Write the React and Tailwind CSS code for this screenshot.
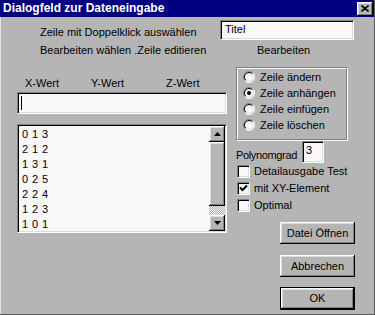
const SUNKEN =
  'border border-t-[#808080] border-l-[#808080] border-r-white border-b-white shadow-[inset_1px_1px_0_#000,inset_-1px_-1px_0_#dcdcdc]'
const RAISED =
  'shadow-[inset_-1px_-1px_0_#000,inset_1px_1px_0_#fff,inset_-2px_-2px_0_#808080,inset_2px_2px_0_#dcdcdc]'

const ROWS = ['0 1 3', '2 1 2', '1 3 1', '0 2 5', '2 2 4', '1 2 3', '1 0 1']
const MODES = [
  { label: 'Zeile ändern', on: false },
  { label: 'Zeile anhängen', on: true },
  { label: 'Zeile einfügen', on: false },
  { label: 'Zeile löschen', on: false },
]
const CHECKS = [
  { label: 'Detailausgabe Test', on: false },
  { label: 'mit XY-Element', on: true },
  { label: 'Optimal', on: false },
]

function Radio({ on }) {
  return (
    <svg width="12" height="12" viewBox="0 0 12 12" className="shrink-0">
      <circle cx="6" cy="6" r="5" fill="#f8f8f8" />
      <path d="M2.1 9.9 A5.5 5.5 0 0 1 9.9 2.1" fill="none" stroke="#808080" strokeWidth="1" />
      <path d="M9.9 2.1 A5.5 5.5 0 0 1 2.1 9.9" fill="none" stroke="#fff" strokeWidth="1" />
      <path d="M2.8 9.2 A4.5 4.5 0 0 1 9.2 2.8" fill="none" stroke="#000" strokeWidth="1" />
      <path d="M9.2 2.8 A4.5 4.5 0 0 1 2.8 9.2" fill="none" stroke="#dcdcdc" strokeWidth="1" />
      {on && <circle cx="6" cy="6" r="2" fill="#000" />}
    </svg>
  )
}

function Check({ on }) {
  return (
    <span className={`w-[13px] h-[13px] shrink-0 bg-[#f8f8f8] flex items-center justify-center ${SUNKEN}`}>
      {on && (
        <svg width="9" height="9" viewBox="0 0 9 9">
          <path d="M1 3.5 L3.5 6 L8 1.5" fill="none" stroke="#000" strokeWidth="2" />
        </svg>
      )}
    </span>
  )
}

function Arrow({ down }) {
  return (
    <div className={`h-[16px] bg-[#b5b5b5] flex items-center justify-center ${RAISED}`}>
      <svg width="7" height="4" viewBox="0 0 7 4">
        <path d={down ? 'M0 0 H7 L3.5 4 Z' : 'M0 4 H7 L3.5 0 Z'} fill="#000" />
      </svg>
    </div>
  )
}

function Button({ children, isDefault }) {
  return (
    <div
      className={`w-[75px] h-[22px] self-end flex items-center justify-center bg-[#b5b5b5] ${
        isDefault ? 'border border-black h-[23px]' : ''
      } ${RAISED}`}
    >
      {children}
    </div>
  )
}

export default function App() {
  return (
    <div className="w-[375px] h-[315px] bg-[#b5b5b5] font-['Liberation_Sans',Arial,sans-serif] text-[11px] leading-[13px] text-black border-r border-b border-[#5a5a5a] overflow-hidden">
      {/* title bar */}
      <div className="h-[17px] bg-[#000080] flex items-center justify-between pl-[3px] pr-[1px]">
        <span className="text-white font-bold text-[12px]">Dialogfeld zur Dateneingabe</span>
        <div className={`w-[16px] h-[14px] bg-[#b5b5b5] flex items-center justify-center ${RAISED}`}>
          <svg width="8" height="7" viewBox="0 0 8 7">
            <path d="M0.5 0.5 L7.5 6.5 M7.5 0.5 L0.5 6.5" stroke="#000" strokeWidth="1.6" />
          </svg>
        </div>
      </div>

      <div className="h-[297px] border-l border-[#e2e2e2]">
        {/* top row */}
        <div className="flex h-[43px]">
          <div className="w-[219px] pl-[39px] pt-[6px] leading-[18px]">
            <div>Zeile mit Doppelklick auswählen</div>
            <div>Bearbeiten wählen .Zeile editieren</div>
          </div>
          <div className="w-[134px]">
            <div className={`mt-[3px] h-[20px] bg-[#f8f8f8] pl-[4px] pt-[2px] ${SUNKEN}`}>Titel</div>
            <div className="pl-[37px] mt-[4px]">Bearbeiten</div>
          </div>
        </div>

        {/* main */}
        <div className="flex">
          {/* left column */}
          <div className="ml-[16px] w-[210px]">
            <div className="flex pt-[17px] h-[32px]">
              <span className="ml-[8px]">X-Wert</span>
              <span className="ml-[32px]">Y-Wert</span>
              <span className="ml-[42px]">Z-Wert</span>
            </div>
            <div className={`h-[22px] bg-[#f8f8f8] flex items-center pl-[3px] ${SUNKEN}`}>
              <span className="w-px h-[14px] bg-black" />
            </div>
            <div className={`mt-[10px] h-[109px] bg-[#f8f8f8] flex ${SUNKEN} p-[1px]`}>
              <div className="flex-1 pl-[3px] pt-[1px] leading-[15px] text-[11px] tracking-[0.4px]">
                {ROWS.map((r, i) => (
                  <div key={i} className="whitespace-pre">{r}</div>
                ))}
              </div>
              <div className="w-[16px] flex flex-col">
                <Arrow />
                <div className={`h-[64px] bg-[#b5b5b5] ${RAISED}`} />
                <div className="flex-1 bg-[repeating-conic-gradient(#f0f0f0_0_25%,#b5b5b5_0_50%)] bg-[length:2px_2px]" />
                <Arrow down />
              </div>
            </div>
          </div>

          {/* right column */}
          <div className="ml-[9px] w-[119px] flex flex-col">
            <div className="mt-[7px] w-[111px] h-[73px] border border-[#808080] shadow-[1px_1px_0_#fff,inset_1px_1px_0_#fff] pt-[1px]">
              {MODES.map((m) => (
                <div key={m.label} className="h-[16px] flex items-center pl-[6px] gap-[5px]">
                  <Radio on={m.on} />
                  <span>{m.label}</span>
                </div>
              ))}
            </div>
            <div className="flex mt-[1px] h-[22px]">
              <span className="w-[66px] self-end mb-[1px] tracking-[-0.35px]">Polynomgrad</span>
              <div className={`w-[22px] h-[22px] bg-[#f8f8f8] pl-[3px] pt-[2px] ${SUNKEN}`}>3</div>
            </div>
            {CHECKS.map((c) => (
              <div key={c.label} className="h-[17px] flex items-center pl-[1px] gap-[4px]">
                <Check on={c.on} />
                <span>{c.label}</span>
              </div>
            ))}
            <div className="mt-[8px] flex flex-col">
              <Button>Datei Öffnen</Button>
              <div className="h-[11px]" />
              <Button>Abbrechen</Button>
              <div className="h-[10px]" />
              <Button isDefault>OK</Button>
            </div>
          </div>
        </div>
      </div>
    </div>
  )
}
